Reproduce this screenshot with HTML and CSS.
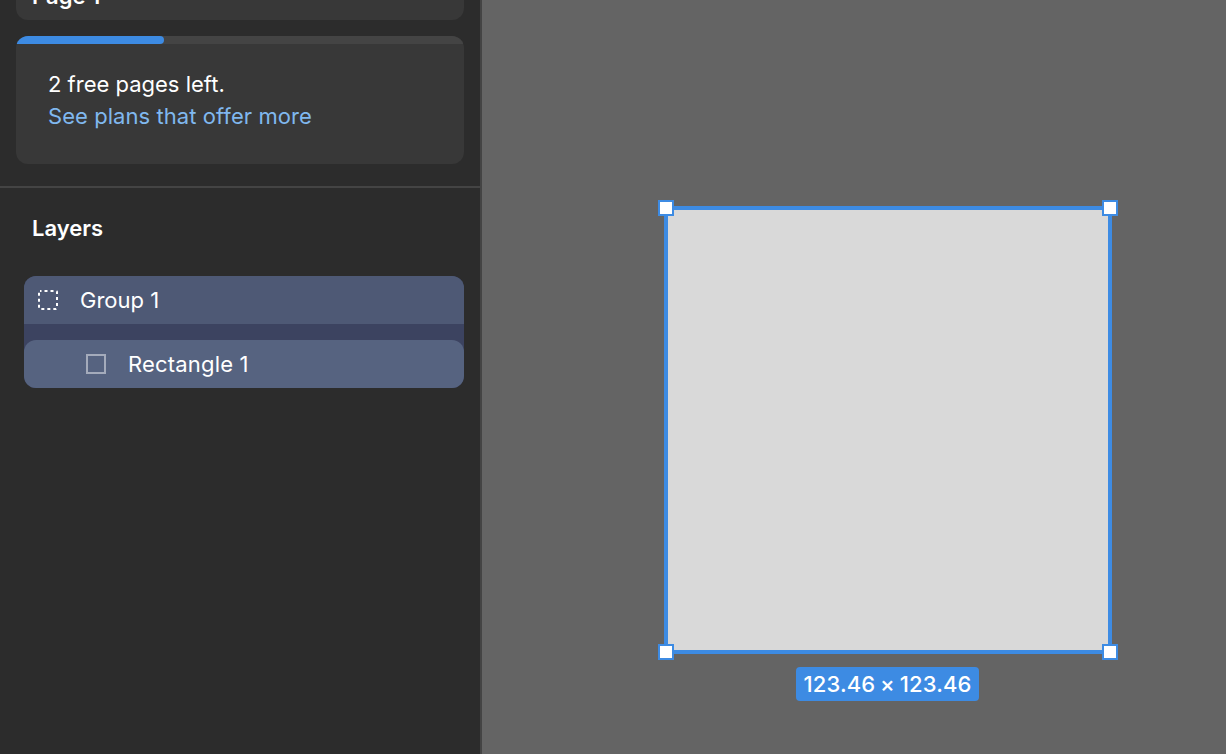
FILE: index.html
```html
<!DOCTYPE html>
<html lang="en">
  <head>
    <title>Layers</title>
    <meta charset="utf-8" />
    <link rel="stylesheet" href="styles.css">
  </head>

  <body>
    <div class="app">
      <aside class="sidebar">
        <div class="pages">
          <div class="page-card">Page 1</div>

          <div class="plan-card">
            <div class="progress"><div class="progress-fill"></div></div>
            <div class="plan-text">
              <div>2 free pages left.</div>
              <a class="plan-link">See plans that offer more</a>
            </div>
          </div>
        </div>

        <div class="layers">
          <h2 class="layers-title">Layers</h2>

          <div class="tree">
            <div class="row row-group">
              <svg class="row-icon" width="20" height="20" viewBox="0 0 20 20">
                <rect x="1" y="1" width="18" height="18" rx="1" fill="none" stroke="#fff" stroke-width="2" stroke-dasharray="3 3" stroke-dashoffset="1.5" />
              </svg>
              <span>Group 1</span>
            </div>
            <div class="row row-child">
              <svg class="row-icon" width="20" height="20" viewBox="0 0 20 20">
                <rect x="1" y="1" width="18" height="18" fill="none" stroke="#a4abbb" stroke-width="2" />
              </svg>
              <span>Rectangle 1</span>
            </div>
          </div>
        </div>
      </aside>

      <main class="canvas">
        <div class="shape">
          <span class="handle handle-tl"></span>
          <span class="handle handle-tr"></span>
          <span class="handle handle-bl"></span>
          <span class="handle handle-br"></span>
          <div class="size-label">123.46 × 123.46</div>
        </div>
      </main>
    </div>
  </body>
</html>
```

FILE: styles.css
```css
html,
body {
  margin: 0;
  height: 100%;
  overflow: hidden;
}

body {
  font-family: Inter, "Liberation Sans", sans-serif;
  font-size: 22px;
  color: #fff;
  background: #646464;
}

.app {
  display: flex;
  height: 754px;
}

.sidebar {
  width: 480px;
  flex-shrink: 0;
  background: #2c2c2c;
  border-right: 2px solid #444;
}

.pages {
  padding: 0 16px 22px;
  margin-top: -28px;
  display: flex;
  flex-direction: column;
  gap: 16px;
  border-bottom: 2px solid #444;
}

.page-card {
  height: 48px;
  padding-left: 16px;
  line-height: 48px;
  font-weight: 600;
  background: #383838;
  border-radius: 0 0 12px 12px;
}

.plan-card {
  height: 128px;
  background: #383838;
  border-radius: 12px;
  overflow: hidden;
}

.progress {
  height: 8px;
  background: #444;
}

.progress-fill {
  width: 148px;
  height: 8px;
  background: #3d8be3;
  border-radius: 0 6px 6px 0;
}

.plan-text {
  padding: 24px 32px;
  line-height: 32px;
}

.plan-link {
  color: #80b8ef;
  letter-spacing: 0.06px;
}

.layers {
  padding: 24px 16px 0 24px;
}

.layers-title {
  margin: 0 0 32px 8px;
  font-size: 22px;
  font-weight: 600;
  line-height: 32px;
}

.tree {
  background: #3c4360;
  border-radius: 12px;
  display: flex;
  flex-direction: column;
  gap: 16px;
}

.row {
  display: flex;
  align-items: center;
  height: 48px;
}

.row-group {
  padding-left: 14px;
  background: #4e5975;
  border-radius: 12px 12px 0 0;
}

.row-child {
  padding-left: 62px;
  letter-spacing: 0.18px;
  background: #566380;
  border-radius: 12px;
}

.row-icon {
  margin-right: 22px;
  flex-shrink: 0;
}

.canvas {
  flex: 1;
  position: relative;
  background: #646464;
}

.shape {
  position: absolute;
  left: 182px;
  top: 206px;
  width: 440px;
  height: 440px;
  background: #d9d9d9;
  border: 4px solid #3d8be3;
}

.handle {
  position: absolute;
  width: 12px;
  height: 12px;
  background: #fff;
  border: 2px solid #3d8be3;
}

.handle-tl {
  left: -10px;
  top: -10px;
}

.handle-tr {
  right: -10px;
  top: -10px;
}

.handle-bl {
  left: -10px;
  bottom: -10px;
}

.handle-br {
  right: -10px;
  bottom: -10px;
}

.size-label {
  position: absolute;
  left: 128px;
  top: 457px;
  width: 183px;
  height: 34px;
  line-height: 34px;
  text-align: center;
  font-weight: 500;
  letter-spacing: 0.1px;
  word-spacing: -1px;
  white-space: nowrap;
  background: #3d8be3;
  border-radius: 4px;
}
```
